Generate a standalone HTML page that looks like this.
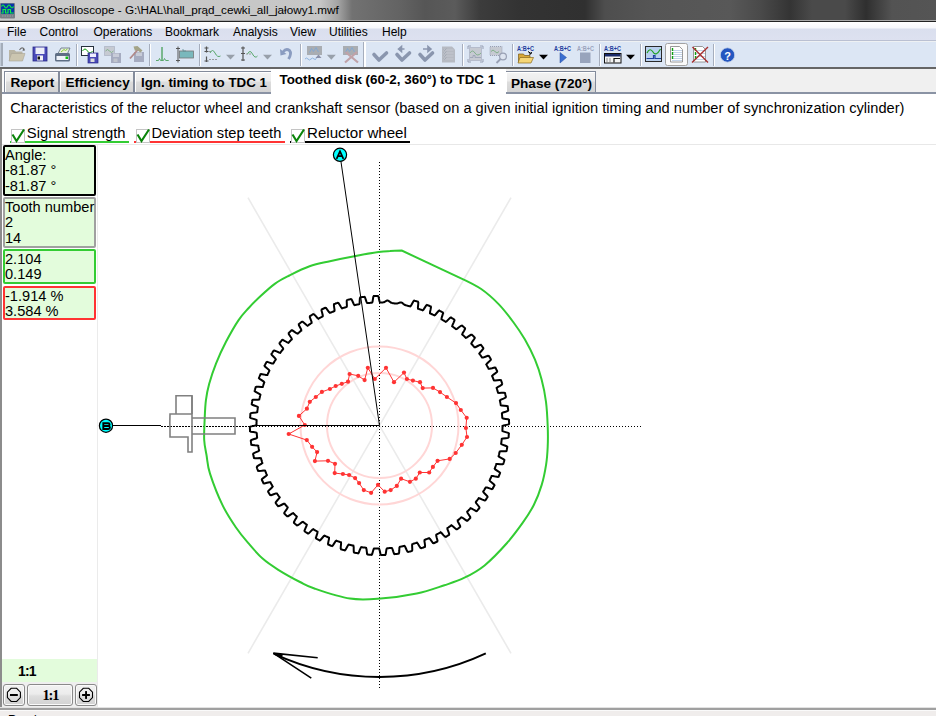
<!DOCTYPE html>
<html><head><meta charset="utf-8">
<style>
*{margin:0;padding:0;box-sizing:border-box}
html,body{width:936px;height:716px;overflow:hidden;background:#fff;font-family:"Liberation Sans",sans-serif;color:#000}
.a{position:absolute}
#title{left:0;top:0;width:936px;height:20px;background:linear-gradient(90deg,#cbcbcb 0,#c6c6c6 320px,#a4a4a4 338px,#727272 352px,#636363 400px,#565656 425px,#5b5b5b 455px,#3c3c3c 480px,#333 520px,#303030 585px,#4e4e4e 605px,#555 650px,#585858 730px,#4a4a4a 760px,#343434 790px,#4a4a4a 812px,#4a4a4a 845px,#2f2f2f 866px,#535353 892px,#555 936px)}
#title .t{left:21px;top:3px;font-size:11.7px;white-space:nowrap;color:#000}
.menu{font-size:12px;top:25px;white-space:nowrap}
.tab{top:71px;height:22px;border:1px solid #838b9b;border-bottom:none;box-shadow:inset 1px 1px 0 #fff;background:linear-gradient(#f3f3f3 0,#ececec 9px,#dddddd 10px,#d3d3d3 100%);font-weight:700;font-size:13.6px;white-space:nowrap;padding-left:5px;line-height:19px;padding-top:1px}
.box{left:3px;width:93px;border:2px solid #000;border-radius:2px;background:#e3fcdc;font-size:14.6px;line-height:15.8px;padding:0.5px 0 0 0;white-space:nowrap}
.cb{width:14px;height:14px;border:1px solid #c4c4c4;background:#fff}
.lbl{white-space:nowrap;top:124.5px}
.btn{top:684px;height:22px;border:1px solid #8a8a8a;border-radius:3px;box-shadow:inset 0 0 0 1px #fafafa;background:linear-gradient(#f2f2f2 0,#ececec 45%,#dedede 55%,#d2d2d2 100%)}
</style></head><body>
<div id="title" class="a">
 <svg class="a" style="left:0;top:0" width="18" height="20"><rect x="0" y="3" width="15" height="15.5" rx="1" fill="#7a7f86"/><rect x="1" y="3.7" width="13" height="10.3" fill="#0a34a8"/><path d="M1.5 6.5 q1.5 -3 3 0 t3 0 t3 0 t3 0" fill="none" stroke="#10f040" stroke-width="1.2"/><path d="M1.2 13 H3 V9.5 H5.5 V13 H8 V9.5 H10.5 V13 H13.8" fill="none" stroke="#10f040" stroke-width="1.2"/><path d="M2 16 h11" stroke="#9aa0a8" stroke-width="1" stroke-dasharray="1.5 1"/></svg>
 <div class="a t">USB Oscilloscope - G:\HAL\hall_prąd_cewki_all_jałowy1.mwf</div>
</div>
<div class="a" style="left:0;top:20px;width:936px;height:1px;background:#a9a9a9"></div>
<div class="a" style="left:0;top:21px;width:936px;height:1px;background:#222"></div>
<div class="a" style="left:0;top:22px;width:936px;height:18px;background:linear-gradient(#ffffff 0,#f6f7fb 6px,#dadfee 7px,#dde1f0 100%)"></div>
<div class="a" style="left:0;top:40px;width:936px;height:1px;background:#bac0d2"></div>
<div class="a" style="left:0;top:41px;width:936px;height:1px;background:#eef1f3"></div>
<div class="a menu" style="left:7px">File</div>
<div class="a menu" style="left:39.5px">Control</div>
<div class="a menu" style="left:93.5px">Operations</div>
<div class="a menu" style="left:165px">Bookmark</div>
<div class="a menu" style="left:233px">Analysis</div>
<div class="a menu" style="left:290px">View</div>
<div class="a menu" style="left:329px">Utilities</div>
<div class="a menu" style="left:382px">Help</div>
<div class="a" style="left:0;top:42px;width:936px;height:25px;background:#dce6f4"></div>
<svg class="a" style="left:0;top:0" width="936" height="68">
 <rect x="0.5" y="43" width="2.5" height="23" fill="#a4adb9"/>
 <!-- separators -->
 <g fill="#a6aebd">
  <rect x="76" y="44" width="1" height="22"/><rect x="149" y="44" width="1" height="22"/><rect x="199" y="44" width="1" height="22"/>
  <rect x="300" y="44" width="1" height="22"/><rect x="363" y="42" width="1" height="25"/><rect x="462" y="44" width="1" height="22"/>
  <rect x="512" y="44" width="1" height="22"/><rect x="599" y="44" width="1" height="22"/><rect x="640" y="44" width="1" height="22"/><rect x="713" y="44" width="1" height="22"/>
 </g>
 <g fill="#fff"><rect x="77" y="44" width="1" height="22"/><rect x="150" y="44" width="1" height="22"/><rect x="200" y="44" width="1" height="22"/><rect x="301" y="44" width="1" height="22"/><rect x="364" y="42" width="2" height="25"/><rect x="463" y="44" width="1" height="22"/><rect x="513" y="44" width="1" height="22"/><rect x="600" y="44" width="1" height="22"/><rect x="641" y="44" width="1" height="22"/><rect x="714" y="44" width="1" height="22"/></g>
 <!-- open folder disabled -->
 <path d="M9 50 h5.5 l1.5 1.5 h6.5 v9.5 h-13.5 z" fill="#b9b5a5"/>
 <path d="M11.5 53.5 h13.5 l-2.5 7.5 h-13.5 z" fill="#cbc5b0" stroke="#aaa595" stroke-width="0.6"/>
 <path d="M19.5 50 q2.5 -4 5 -0.5" fill="none" stroke="#707070" stroke-width="1.1"/><path d="M23.5 48 l1.5 2.5 l-2.5 0.3z" fill="#606060"/>
 <!-- floppy -->
 <rect x="33" y="47" width="14" height="14" fill="#4a4ab8" stroke="#2a2a88" stroke-width="0.8"/>
 <rect x="35.5" y="47.5" width="9" height="6.5" fill="#eceef8"/>
 <rect x="37" y="55.5" width="6" height="5" fill="#f4f4f4"/><rect x="37.5" y="56.5" width="2.5" height="3" fill="#111"/>
 <!-- printer -->
 <path d="M58 53.5 l3 -5.5 h9 l-2.5 5.5z" fill="#e6eee0" stroke="#5d6d80" stroke-width="0.8"/>
 <path d="M61 52 l3 -2.5 l1.5 1 l2 -1.5" fill="none" stroke="#8ad030" stroke-width="1"/>
 <rect x="55" y="53" width="15" height="8.5" rx="1.5" fill="#5e6e84"/>
 <rect x="56.5" y="56" width="12" height="4" fill="#eef2f8"/><rect x="65.5" y="56.5" width="2.5" height="2.5" fill="#10c010"/>
 <!-- graph + floppy -->
 <rect x="81.5" y="46.5" width="12" height="9" fill="#fff" stroke="#26303c" stroke-width="1"/>
 <path d="M82.5 51 q2.5 -4 5 0 t5 0" fill="none" stroke="#10a010" stroke-width="1"/>
 <rect x="88" y="53" width="10" height="10" fill="#4a4ab8" stroke="#2a2a88" stroke-width="0.7"/><rect x="90" y="53.5" width="6" height="3.5" fill="#eef"/><rect x="90.5" y="58.5" width="4" height="3.5" fill="#ddd"/>
 <!-- disabled graph+floppy -->
 <rect x="104.5" y="46.5" width="10" height="9" fill="#c6cad2" stroke="#9aa2b4" stroke-dasharray="1 1"/>
 <path d="M105.5 51 q2 -3 4 0 t4 0" fill="none" stroke="#70a878" stroke-width="0.8"/>
 <rect x="111" y="53" width="10" height="10" fill="#a6acc0"/><rect x="113" y="53.5" width="6" height="3.5" fill="#c8ccd8"/><rect x="113.5" y="58.5" width="4" height="3.5" fill="#c0c4cc"/>
 <!-- hammer + floppy -->
 <rect x="134" y="52" width="10" height="10" fill="#a6acc0"/><rect x="136" y="52.5" width="6" height="3.5" fill="#c8ccd8"/>
 <path d="M130 58.5 L138 49.5" stroke="#b08888" stroke-width="1.8"/>
 <path d="M133.5 46.5 l4 -0.5 l5 4.5 l-2 2 l-3.5 -2.5 l-2 1z" fill="#a4a488"/>
 <!-- peak -->
 <path d="M156 60.5 h2.5 l1 -2 l1 2 h1.5 v-13.5 v13.5 h1.5 l1 -2 l1.2 2 h3" fill="none" stroke="#5aa86c" stroke-width="1"/>
 <!-- teal band -->
 <rect x="179.5" y="51" width="14" height="7" fill="#7ab8bc" stroke="#777" stroke-width="0.8"/>
 <path d="M178 46.5 v16 M176 48.5 h4 M176 60.5 h4" stroke="#555" stroke-width="1"/>
 <path d="M183 49 v2 h3" fill="none" stroke="#5a8a90" stroke-width="0.8"/>
 <!-- arrows+wave 1 -->
 <path d="M206.5 46.5 v6 M206.5 56.5 v5.5 M204.5 48 h4 M204.5 61 h4 M204.5 51.5 h4" stroke="#555" stroke-width="1.2"/>
 <path d="M209 51.5 h2 M209 59.5 h2 m1 0 h2 m1 0 h2" stroke="#888" stroke-width="0.8"/>
 <path d="M210 53 q2.5 -5 5 0 t5.5 3" fill="none" stroke="#5aa86c" stroke-width="1"/>
 <path d="M226 54.8 h9 l-4.5 4.8z" fill="#98a0aa"/>
 <!-- arrows+wave 2 -->
 <path d="M243 46.5 v14.5 M241 48 h4 M241 60 h4 M241 53.5 h4" stroke="#555" stroke-width="1.2"/>
 <path d="M246 54 h2 m1 0 h2" stroke="#888" stroke-width="0.8"/>
 <path d="M247.5 54 q2.5 -5 5 0 t5 2" fill="none" stroke="#5aa86c" stroke-width="1"/>
 <path d="M263 54.8 h9 l-4.5 4.8z" fill="#98a0aa"/>
 <!-- undo -->
 <path d="M283 52 q3 -4 6.5 -1.5 q2.5 3 -1 8.5" fill="none" stroke="#8a9cc0" stroke-width="2.8"/>
 <path d="M280 49 l0.5 6.5 l6 -1.5z" fill="#8a9cc0"/>
 <!-- disabled graph w/ dropdown -->
 <rect x="307" y="46" width="15" height="9" fill="#a9adb2"/>
 <path d="M309.5 52.5 l2 -4 l2 3 l2.5 -4 l2.5 4.5" fill="none" stroke="#7aa6d8" stroke-width="0.8"/>
 <path d="M305 59 q1.5 -2 3 0 t3 0 t3 0 t3 -2" fill="none" stroke="#7aa6d8" stroke-width="0.8"/>
 <path d="M318.5 54.5 l-3 3.5 h6z" fill="#8a90a8"/>
 <path d="M326.8 54.8 h9 l-4.5 5z" fill="#98a0aa"/>
 <!-- disabled graph with X -->
 <rect x="343" y="46" width="15" height="9" fill="#a9adb2"/>
 <path d="M345.5 52.5 l2 -4 l2 3 l2.5 -4 l2.5 4.5" fill="none" stroke="#7aa6d8" stroke-width="0.8"/>
 <path d="M345 62.5 L357 52 M345.5 52 L358 62.5" stroke="#c0a2a8" stroke-width="2.2"/>
 <!-- checks -->
 <g fill="none" stroke="#8a96ae" stroke-width="3.6" stroke-linecap="round" stroke-linejoin="round">
  <path d="M374 54.5 l5 5.5 l7.5 -7"/><path d="M397 54.5 l5 5.5 l7.5 -7"/><path d="M420 54.5 l5 5.5 l7.5 -7"/>
 </g>
 <path d="M398.5 49 h6 M398.5 49 l3 -2.5 v5z" stroke="#8a96ae" stroke-width="1.6" fill="#8a96ae"/>
 <path d="M423 49 h5.5 M431 49 l-3 -2.5 v5z" stroke="#8a96ae" stroke-width="1.6" fill="#8a96ae"/>
 <!-- doc gray -->
 <path d="M442 46.5 h10 l3 3 v13 h-13z" fill="#b6bac2"/>
 <path d="M443.5 50 h10 M443.5 53 h10 M443.5 56 h10 M443.5 59 h10" stroke="#c8ccd4" stroke-width="0.8"/>
 <path d="M443.5 49.5 l1 1 l2 -2 M443.5 52.5 l1 1 l2 -2 M443.5 55.5 l1 1 l2 -2 M443.5 58.5 l1 1 l2 -2" fill="none" stroke="#9aa0ac" stroke-width="0.7"/>
 <!-- dotted graph -->
 <rect x="469.5" y="47.5" width="12" height="13" fill="#c6cad2" stroke="#98a0b4" stroke-dasharray="1 1"/>
 <path d="M470 53 q2.5 -4 5 0 t6 0" fill="none" stroke="#70a878" stroke-width="0.8"/>
 <path d="M470 57.5 h3 v-2 h2 v2 h6" fill="none" stroke="#98a0b4" stroke-width="0.8"/>
 <path d="M468 46 h3 M468 46 v3 M480 46 h3 M483 46 v3 M468 62 h3 M468 62 v-3 M480 62 h3 M483 62 v-3" stroke="#98a0b4" stroke-width="1"/>
 <!-- magnifier -->
 <rect x="490" y="46.5" width="12" height="9" fill="#c6cad2" stroke="#98a0b4" stroke-dasharray="1 1"/>
 <path d="M491 51.5 q2 -3 4 0 t4 0" fill="none" stroke="#70a878" stroke-width="0.8"/>
 <circle cx="503" cy="56.5" r="3.4" fill="#dde4f0" stroke="#98a0b4" stroke-width="1.2"/>
 <path d="M500.5 59 l-4 4" stroke="#98a0b4" stroke-width="1.8"/>
 <!-- A:B+C texts -->
 <g font-family="Liberation Sans" font-weight="700" font-size="6.5" fill="#1c3c9c">
  <text x="517" y="51" textLength="17" lengthAdjust="spacingAndGlyphs">A:B+C</text>
  <text x="554" y="51" textLength="17" lengthAdjust="spacingAndGlyphs">A:B+C</text>
  <text x="577" y="51" textLength="17" lengthAdjust="spacingAndGlyphs" fill="#9aa4bc">A:B+C</text>
  <text x="604" y="51" textLength="17" lengthAdjust="spacingAndGlyphs">A:B+C</text>
 </g>
 <!-- yellow folder -->
 <path d="M518.5 54 h5 l1 1.5 h5.5 v7 h-11.5z" fill="#d8a838" stroke="#7a5a18" stroke-width="0.7"/>
 <path d="M520 57.5 h13.5 l-2.5 5.5 h-13z" fill="#f6d676" stroke="#8a6a20" stroke-width="0.7"/>
 <path d="M528 51.5 l3 2 M531.5 52 l-0.5 2 l-2 0" stroke="#000" stroke-width="1" fill="none"/>
 <path d="M539 54.8 h9 l-4.5 4.8z" fill="#000"/>
 <!-- play -->
 <path d="M560 52.5 l6.5 5 l-6.5 5.5z" fill="#3a6ed0" stroke="#2a4ea0" stroke-width="0.5"/>
 <rect x="580" y="52.5" width="10.5" height="10.5" fill="#98a4bc"/>
 <!-- window -->
 <rect x="604.5" y="53.5" width="16.5" height="9.5" fill="#f4f4f4" stroke="#111" stroke-width="1"/>
 <rect x="605" y="54" width="15.5" height="2.5" fill="#1a2a6a"/>
 <path d="M606 59 h2 m1 0 h2 M606 61 h2 m1 0 h2" stroke="#777" stroke-width="0.8"/>
 <path d="M614 62.5 v-4 h6" fill="none" stroke="#111" stroke-width="1.2"/>
 <path d="M626 54.8 h9 l-4.5 4.8z" fill="#000"/>
 <!-- chart icon -->
 <rect x="645.5" y="46.5" width="16" height="15" fill="#b8d0ee" stroke="#2a2a2a" stroke-width="1"/>
 <path d="M647 53 q3 -6 6 -1 t7.5 -3" fill="none" stroke="#20a020" stroke-width="1.2"/>
 <path d="M646.5 58.5 h7 v-3 h1.5 v3 h6" fill="none" stroke="#2040a0" stroke-width="1.2"/>
 <!-- pressed button -->
 <rect x="665.5" y="43.5" width="22" height="22" rx="2" fill="#fafafa" stroke="#a2a2a2" stroke-width="1"/>
 <path d="M670.5 46.5 h9 l3 3 v12.5 h-12z" fill="#fff" stroke="#808080" stroke-width="0.8"/>
 <path d="M672 50.5 h10 M672 52.5 h10 M672 54.5 h10 M672 56.5 h10 M672 58.5 h10 M672 60.5 h10" stroke="#a8c0e0" stroke-width="0.7"/>
 <path d="M672.5 48 v3 M672.5 52 v3 M672.5 56 v3" stroke="#10a010" stroke-width="1.4"/>
 <!-- doc with X -->
 <path d="M693.5 46.5 h9 l3 3 v12.5 h-12z" fill="#fff" stroke="#808080" stroke-width="0.8"/>
 <path d="M695 50.5 h10 M695 53.5 h10 M695 56.5 h10 M695 59.5 h10" stroke="#a8c0e0" stroke-width="0.7"/>
 <path d="M695.5 48 v3 M695.5 52 v3 M695.5 56 v3" stroke="#10a010" stroke-width="1.4"/>
 <path d="M692 62.5 L708 47 M692.5 47 L708 62.5" stroke="#a83030" stroke-width="1.4"/>
 <!-- help -->
 <circle cx="727.5" cy="55" r="7.2" fill="#2456c0" stroke="#c8d4e8" stroke-width="0.8"/>
 <text x="727.5" y="59.5" font-family="Liberation Sans" font-weight="700" font-size="11" fill="#fff" text-anchor="middle">?</text>
</svg>

<div class="a" style="left:0;top:67px;width:936px;height:2px;background:#656565"></div>
<div class="a" style="left:0;top:69px;width:936px;height:23px;background:#f0f0f0"></div>
<div class="a" style="left:2px;top:69px;width:270px;height:2px;background:#fafafa"></div>
<div class="a" style="left:2px;top:69px;width:2px;height:23px;background:#fafafa"></div>
<div class="a tab" style="left:4px;width:55px;padding-left:5.5px">Report</div>
<div class="a tab" style="left:59px;width:75px;padding-left:5.5px">Efficiency</div>
<div class="a tab" style="left:134px;width:138px;padding-left:6px;font-size:13.35px">Ign. timing to TDC 1</div>
<div class="a tab" style="left:505px;width:91px;top:71px;padding-left:5px;line-height:19px;padding-top:1.5px">Phase (720°)</div>
<div class="a" style="left:0;top:92px;width:936px;height:2px;background:#8a93a4"></div>
<div class="a" style="left:271px;top:69px;width:235px;height:25px;background:#fff"></div>
<div class="a" style="left:279.5px;top:72px;font-weight:700;font-size:13.4px;white-space:nowrap">Toothed disk (60-2, 360°) to TDC 1</div>
<div class="a" style="left:0;top:69px;width:2px;height:639px;background:#8c8c8c"></div>
<div class="a" style="left:10.3px;top:100px;font-size:14.61px;white-space:nowrap">Characteristics of the reluctor wheel and crankshaft sensor (based on a given initial ignition timing and number of synchronization cylinder)</div>
<div class="a" style="left:2px;top:143.5px;width:934px;height:1px;background:#e8e8e8"></div>
<!-- checkboxes -->
<div class="a" style="left:10px;top:141px;width:119px;height:2px;background:#33cc33"></div>
<div class="a" style="left:134px;top:141px;width:151px;height:2px;background:#ff3333"></div>
<div class="a" style="left:290px;top:141px;width:120px;height:2px;background:#000"></div>
<div class="a cb" style="left:11px;top:129px"></div>
<div class="a cb" style="left:136px;top:129px"></div>
<div class="a cb" style="left:291px;top:129px"></div>
<svg class="a" style="left:0;top:120px" width="320" height="26"><g fill="none" stroke="#0a840a" stroke-width="2.1" stroke-linejoin="miter"><path d="M12.5 14.5 L16.5 21 L24 9.5"/><path d="M137.5 14.5 L141.5 21 L149 9.5"/><path d="M292.5 14.5 L296.5 21 L304 9.5"/></g></svg>
<div class="a lbl" style="left:26.8px;font-size:14.8px">Signal strength</div>
<div class="a lbl" style="left:151.5px;font-size:14.7px">Deviation step teeth</div>
<div class="a lbl" style="left:307px;font-size:15.1px;top:124px">Reluctor wheel</div>
<!-- left panel -->
<div class="a" style="left:97px;top:145px;width:1px;height:562px;background:#ebebeb"></div>
<div class="a box" style="top:145px;height:51px">Angle:<br>-81.87 °<br>-81.87 °</div>
<div class="a box" style="top:197px;height:51px;border-color:#a0a0a0">Tooth number<br>2<br>14</div>
<div class="a box" style="top:249px;height:35px;border-color:#33cc33">2.104<br>0.149</div>
<div class="a box" style="top:286px;height:34px;border-color:#ff3333">-1.914 %<br>3.584 %</div>

<svg width="936" height="716" style="position:absolute;left:0;top:0">
 <g stroke="#ebebeb" stroke-width="1.6"><line x1="248" y1="653.3" x2="511" y2="197.7"/><line x1="511" y1="653.3" x2="248" y2="197.7"/></g>
 <g stroke="#000" stroke-width="1" stroke-dasharray="1 2">
  <line x1="379.5" y1="162" x2="379.5" y2="688"/>
  <line x1="250" y1="426.5" x2="642" y2="426.5"/>
 </g>
 <line x1="161" y1="426.5" x2="250" y2="426.5" stroke="#000" stroke-width="1" stroke-dasharray="2 1"/>
 <g fill="none" stroke="#ffd6d6" stroke-width="2">
  <circle cx="379.5" cy="425.5" r="52.5"/><circle cx="379.5" cy="425.5" r="79"/>
 </g>
 <path d="M204.2 440 C203.9 434.3 204.3 427.2 204.6 420.6 C204.9 414 205.1 406.5 205.9 400.4 C206.7 394.2 207.5 389.8 209.2 383.7 C210.9 377.6 213.2 370.6 216 363.6 C218.8 356.6 222.2 349.1 226 341.8 C229.8 334.6 234.8 325.7 238.6 320.1 C242.4 314.5 245 312.1 248.7 308 C252.4 303.9 256.5 299.9 260.9 295.8 C265.3 291.7 270.4 287 275.1 283.6 C279.8 280.2 283.6 278.4 289.3 275.5 C295.1 272.6 302.8 268.7 309.6 266.3 C316.4 263.9 322.4 262.9 329.9 261.2 C337.3 259.5 346.2 257.7 354.3 256.2 C362.4 254.7 372.7 252.9 378.6 252.1 C384.6 251.2 386.1 251.3 390 251.1 C393.9 250.8 401.8 250.6 401.8 250.6 C401.8 250.6 460 277.8 460 277.8 C460 277.8 474.7 284.5 481.2 289 C487.7 293.5 493.7 299 499.1 304.6 C504.5 310.2 509.3 316.7 513.6 322.5 C517.9 328.3 521.2 333.2 524.8 339.3 C528.3 345.4 532.1 352.7 534.9 359.4 C537.7 366.1 539.8 372.4 541.6 379.5 C543.5 386.6 545 394.1 546 401.8 C547 409.6 547.4 418.5 547.7 426 C548 433.5 548 440.4 547.7 446.8 C547.4 453.2 547.1 458.4 546.1 464.7 C545.1 471 543.8 478.2 541.7 484.9 C539.7 491.6 537 498.7 533.8 505 C530.6 511.3 527.1 516.6 522.6 522.9 C518.1 529.2 513.3 535.9 507 543 C500.7 550.1 491.7 559.6 484.6 565.4 C477.5 571.2 471.2 574.4 464.5 577.7 C457.8 581 452.4 582.6 444.4 585.3 C436.4 587.9 427.3 591.4 416.7 593.6 C406.1 595.8 391.7 597.8 380.6 598.6 C369.5 599.4 361 600.3 350 598.6 C339 596.9 322.7 591.3 314.4 588.5 C306.1 585.7 306 585.1 300 582 C294 578.9 284.5 573.7 278.3 569.8 C272.1 565.9 267.6 563.1 262.6 558.6 C257.6 554.1 252.6 548.1 248.1 542.9 C243.6 537.7 240.1 533.5 235.8 527.2 C231.5 520.9 226.7 513.8 222.4 504.9 C218.1 496 212.7 481.9 210 473.6 C207.3 465.3 207.5 460.6 206.5 455 C205.5 449.4 204.5 445.7 204.2 440Z" fill="none" stroke="#33cc33" stroke-width="2"/>
 <path d="M503.7 425.5 L506.3 424.9 L508.6 424.4 L509.1 423.8 L509.1 423.2 L509.1 422.7 L509.1 422.1 L509 421.5 L509 421 L509 420.4 L509 419.8 L508.1 419.3 L505.6 418.9 L503.1 418.5 L502.3 418 L502.2 417.5 L502.2 416.9 L502.2 416.4 L502.1 415.8 L502.1 415.3 L502 414.8 L502 414.2 L501.9 413.7 L501.9 413.2 L503.1 412.5 L505.6 411.7 L507.8 410.9 L508.2 410.3 L508.1 409.7 L508.1 409.1 L508 408.6 L507.9 408 L507.8 407.5 L507.8 406.9 L507.7 406.3 L506.8 405.9 L504.2 405.7 L501.7 405.6 L500.8 405.2 L500.7 404.7 L500.6 404.1 L500.5 403.6 L500.4 403.1 L500.3 402.6 L500.2 402 L500.1 401.5 L500 401 L499.9 400.5 L501 399.7 L503.5 398.6 L505.6 397.6 L505.9 396.9 L505.8 396.3 L505.6 395.8 L505.5 395.2 L505.4 394.7 L505.3 394.1 L505.1 393.6 L505 393.1 L504 392.7 L501.5 392.8 L499 392.9 L498 392.6 L497.9 392.1 L497.7 391.6 L497.6 391.1 L497.4 390.6 L497.3 390.1 L497.1 389.5 L497 389 L496.8 388.5 L496.6 388 L497.7 387.1 L500 385.8 L501.9 384.5 L502.2 383.8 L502 383.3 L501.9 382.8 L501.7 382.2 L501.5 381.7 L501.3 381.2 L501.1 380.6 L500.9 380.1 L499.9 379.9 L497.4 380.2 L494.9 380.6 L493.9 380.4 L493.7 379.9 L493.5 379.4 L493.3 378.9 L493.1 378.4 L492.9 377.9 L492.7 377.4 L492.5 376.9 L492.3 376.5 L492.1 376 L493 375 L495.2 373.4 L497 372 L497.2 371.2 L497 370.7 L496.7 370.2 L496.5 369.7 L496.2 369.2 L496 368.7 L495.7 368.2 L495.5 367.7 L494.5 367.5 L492 368.2 L489.6 368.8 L488.6 368.7 L488.4 368.2 L488.1 367.8 L487.8 367.3 L487.6 366.8 L487.3 366.3 L487.1 365.9 L486.8 365.4 L486.6 364.9 L486.3 364.5 L487.1 363.4 L489.1 361.6 L490.7 360 L490.9 359.2 L490.6 358.8 L490.3 358.3 L490 357.8 L489.7 357.3 L489.4 356.8 L489.1 356.3 L488.8 355.9 L487.8 355.8 L485.4 356.7 L483.1 357.6 L482.1 357.6 L481.8 357.2 L481.5 356.7 L481.2 356.3 L480.9 355.8 L480.6 355.4 L480.3 355 L479.9 354.5 L479.6 354.1 L479.3 353.6 L480 352.5 L481.8 350.5 L483.3 348.7 L483.3 348 L483 347.5 L482.7 347.1 L482.3 346.6 L482 346.2 L481.6 345.7 L481.3 345.3 L480.9 344.8 L479.9 344.9 L477.7 346 L475.4 347.2 L474.4 347.3 L474.1 346.8 L473.7 346.4 L473.4 346 L473 345.6 L472.7 345.2 L472.3 344.8 L472 344.4 L471.6 344 L471.3 343.6 L471.8 342.4 L473.4 340.2 L474.7 338.3 L474.7 337.5 L474.3 337.1 L473.9 336.7 L473.5 336.3 L473.1 335.9 L472.7 335.5 L472.3 335.1 L471.9 334.7 L470.9 334.8 L468.8 336.2 L466.7 337.6 L465.7 337.8 L465.3 337.4 L464.9 337 L464.6 336.6 L464.2 336.3 L463.8 335.9 L463.4 335.5 L463 335.2 L462.6 334.8 L462.2 334.5 L462.6 333.2 L464 330.9 L465.1 328.8 L465 328.1 L464.5 327.7 L464.1 327.3 L463.7 327 L463.2 326.6 L462.8 326.2 L462.4 325.9 L461.9 325.5 L461 325.8 L459 327.3 L457 328.9 L456.1 329.2 L455.6 328.9 L455.2 328.6 L454.8 328.2 L454.4 327.9 L454 327.6 L453.5 327.3 L453.1 326.9 L452.7 326.6 L452.2 326.3 L452.5 325 L453.6 322.6 L454.5 320.4 L454.3 319.7 L453.8 319.3 L453.4 319 L452.9 318.7 L452.4 318.4 L452 318.1 L451.5 317.7 L451 317.4 L450.1 317.8 L448.3 319.6 L446.5 321.4 L445.6 321.8 L445.1 321.5 L444.7 321.2 L444.2 320.9 L443.8 320.6 L443.3 320.3 L442.8 320.1 L442.4 319.8 L441.9 319.5 L441.5 319.2 L441.6 317.9 L442.4 315.4 L443.1 313.1 L442.8 312.4 L442.3 312.1 L441.8 311.9 L441.3 311.6 L440.8 311.3 L440.3 311.1 L439.8 310.8 L439.3 310.5 L438.5 311 L436.8 313 L435.2 314.9 L434.4 315.4 L433.9 315.2 L433.4 314.9 L432.9 314.7 L432.5 314.5 L432 314.3 L431.5 314 L431 313.8 L430.5 313.6 L430 313.4 L430 312 L430.6 309.4 L431 307.1 L430.7 306.4 L430.1 306.2 L429.6 306 L429.1 305.8 L428.6 305.5 L428 305.3 L427.5 305.1 L427 304.9 L426.2 305.5 L424.8 307.6 L423.4 309.7 L422.6 310.3 L422.1 310.1 L421.6 309.9 L421.1 309.7 L420.6 309.6 L420.1 309.4 L419.5 309.2 L419 309 L418.5 308.9 L418 308.7 L417.9 307.3 L418.2 304.7 L418.3 302.4 L417.9 301.7 L417.4 301.6 L416.9 301.4 L416.3 301.2 L415.8 301.1 L415.2 300.9 L414.7 300.8 L414.1 300.6 L413.4 301.3 L412.2 303.5 L411 305.7 L410.3 306.4 L409.8 306.3 L409.3 306.2 L408.7 306 L408.2 305.9 L407.7 305.8 L407.2 305.6 L406.7 305.5 L406.1 305.4 L405.6 305.2 L405.1 305 L404.6 304.8 L404.1 304.5 L403.7 304.1 L403.2 303.7 L402.7 303.2 L402.2 302.9 L401.7 302.6 L401.2 302.4 L400.7 302.4 L400.1 302.5 L399.5 302.7 L398.9 302.9 L398.3 303.1 L397.8 303.3 L397.2 303.4 L396.6 303.5 L396.1 303.5 L395.6 303.5 L395 303.5 L394.5 303.4 L394 303.3 L393.4 303.3 L392.9 303.2 L392.4 303.1 L391.8 302.9 L391.3 302.7 L390.8 302.5 L390.3 302.2 L389.8 301.8 L389.3 301.4 L388.8 301 L388.2 300.7 L387.7 300.6 L387.1 300.6 L386.6 300.7 L386 301 L385.5 301.4 L384.9 301.7 L384.4 302 L383.8 302.2 L383.3 302.3 L382.7 302.4 L382.2 302.5 L381.6 302.5 L381.1 302.5 L380.6 302.5 L380 302.5 L379.5 301.3 L378.9 298.7 L378.4 296.4 L377.8 295.9 L377.2 295.9 L376.7 295.9 L376.1 295.9 L375.5 296 L375 296 L374.4 296 L373.8 296 L373.3 296.9 L372.9 299.4 L372.5 301.9 L372 302.7 L371.5 302.8 L370.9 302.8 L370.4 302.8 L369.8 302.9 L369.3 302.9 L368.8 303 L368.2 303 L367.7 303.1 L367.2 303.1 L366.5 301.9 L365.7 299.4 L364.9 297.2 L364.3 296.8 L363.7 296.9 L363.1 296.9 L362.6 297 L362 297.1 L361.5 297.2 L360.9 297.2 L360.3 297.3 L359.9 298.2 L359.7 300.8 L359.6 303.3 L359.2 304.2 L358.7 304.3 L358.1 304.4 L357.6 304.5 L357.1 304.6 L356.6 304.7 L356 304.8 L355.5 304.9 L355 305 L354.5 305.1 L353.7 304 L352.6 301.5 L351.6 299.4 L350.9 299.1 L350.3 299.2 L349.8 299.4 L349.2 299.5 L348.7 299.6 L348.1 299.7 L347.6 299.9 L347.1 300 L346.7 301 L346.8 303.5 L346.9 306 L346.6 307 L346.1 307.1 L345.6 307.3 L345.1 307.4 L344.6 307.6 L344.1 307.7 L343.5 307.9 L343 308 L342.5 308.2 L342 308.4 L341.1 307.3 L339.8 305 L338.5 303.1 L337.8 302.8 L337.3 303 L336.8 303.1 L336.2 303.3 L335.7 303.5 L335.2 303.7 L334.6 303.9 L334.1 304.1 L333.9 305.1 L334.2 307.6 L334.6 310.1 L334.4 311.1 L333.9 311.3 L333.4 311.5 L332.9 311.7 L332.4 311.9 L331.9 312.1 L331.4 312.3 L330.9 312.5 L330.5 312.7 L330 312.9 L329 312 L327.4 309.8 L326 308 L325.2 307.8 L324.7 308 L324.2 308.3 L323.7 308.5 L323.2 308.8 L322.7 309 L322.2 309.3 L321.7 309.5 L321.5 310.5 L322.2 313 L322.8 315.4 L322.7 316.4 L322.2 316.6 L321.8 316.9 L321.3 317.2 L320.8 317.4 L320.3 317.7 L319.9 317.9 L319.4 318.2 L318.9 318.4 L318.5 318.7 L317.4 317.9 L315.6 315.9 L314 314.3 L313.2 314.1 L312.8 314.4 L312.3 314.7 L311.8 315 L311.3 315.3 L310.8 315.6 L310.3 315.9 L309.9 316.2 L309.8 317.2 L310.7 319.6 L311.6 321.9 L311.6 322.9 L311.2 323.2 L310.7 323.5 L310.3 323.8 L309.8 324.1 L309.4 324.4 L309 324.7 L308.5 325.1 L308.1 325.4 L307.6 325.7 L306.5 325 L304.5 323.2 L302.7 321.7 L302 321.7 L301.5 322 L301.1 322.3 L300.6 322.7 L300.2 323 L299.7 323.4 L299.3 323.7 L298.8 324.1 L298.9 325.1 L300 327.3 L301.2 329.6 L301.3 330.6 L300.8 330.9 L300.4 331.3 L300 331.6 L299.6 332 L299.2 332.3 L298.8 332.7 L298.4 333 L298 333.4 L297.6 333.7 L296.4 333.2 L294.2 331.6 L292.3 330.3 L291.5 330.3 L291.1 330.7 L290.7 331.1 L290.3 331.5 L289.9 331.9 L289.5 332.3 L289.1 332.7 L288.7 333.1 L288.8 334.1 L290.2 336.2 L291.6 338.3 L291.8 339.3 L291.4 339.7 L291 340.1 L290.6 340.4 L290.3 340.8 L289.9 341.2 L289.5 341.6 L289.2 342 L288.8 342.4 L288.5 342.8 L287.2 342.4 L284.9 341 L282.8 339.9 L282.1 340 L281.7 340.5 L281.3 340.9 L281 341.3 L280.6 341.8 L280.2 342.2 L279.9 342.6 L279.5 343.1 L279.8 344 L281.3 346 L282.9 348 L283.2 348.9 L282.9 349.4 L282.6 349.8 L282.2 350.2 L281.9 350.6 L281.6 351 L281.3 351.5 L280.9 351.9 L280.6 352.3 L280.3 352.8 L279 352.5 L276.6 351.4 L274.4 350.5 L273.7 350.7 L273.3 351.2 L273 351.6 L272.7 352.1 L272.4 352.6 L272.1 353 L271.7 353.5 L271.4 354 L271.8 354.9 L273.6 356.7 L275.4 358.5 L275.8 359.4 L275.5 359.9 L275.2 360.3 L274.9 360.8 L274.6 361.2 L274.3 361.7 L274.1 362.2 L273.8 362.6 L273.5 363.1 L273.2 363.5 L271.9 363.4 L269.4 362.6 L267.1 361.9 L266.4 362.2 L266.1 362.7 L265.9 363.2 L265.6 363.7 L265.3 364.2 L265.1 364.7 L264.8 365.2 L264.5 365.7 L265 366.5 L267 368.2 L268.9 369.8 L269.4 370.6 L269.2 371.1 L268.9 371.6 L268.7 372.1 L268.5 372.5 L268.3 373 L268 373.5 L267.8 374 L267.6 374.5 L267.4 375 L266 375 L263.4 374.4 L261.1 374 L260.4 374.3 L260.2 374.9 L260 375.4 L259.8 375.9 L259.5 376.4 L259.3 377 L259.1 377.5 L258.9 378 L259.5 378.8 L261.6 380.2 L263.7 381.6 L264.3 382.4 L264.1 382.9 L263.9 383.4 L263.7 383.9 L263.6 384.4 L263.4 384.9 L263.2 385.5 L263 386 L262.9 386.5 L262.7 387 L261.3 387.1 L258.7 386.8 L256.4 386.7 L255.7 387.1 L255.6 387.6 L255.4 388.1 L255.2 388.7 L255.1 389.2 L254.9 389.8 L254.8 390.3 L254.6 390.9 L255.3 391.6 L257.5 392.8 L259.7 394 L260.4 394.7 L260.3 395.2 L260.2 395.7 L260 396.3 L259.9 396.8 L259.8 397.3 L259.7 397.8 L259.5 398.4 L259.4 398.9 L259.3 399.4 L258 399.7 L255.3 399.7 L253 399.8 L252.4 400.2 L252.3 400.8 L252.2 401.3 L252.1 401.9 L252 402.4 L251.9 403 L251.8 403.6 L251.7 404.1 L252.4 404.8 L254.8 405.7 L257.1 406.7 L257.9 407.3 L257.8 407.9 L257.7 408.4 L257.6 408.9 L257.6 409.4 L257.5 410 L257.4 410.5 L257.4 411 L257.3 411.6 L257.2 412.1 L255.9 412.5 L253.3 412.8 L251 413.1 L250.4 413.6 L250.4 414.2 L250.3 414.8 L250.3 415.3 L250.3 415.9 L250.2 416.5 L250.2 417 L250.1 417.6 L250.9 418.2 L253.4 418.9 L255.8 419.6 L256.6 420.1 L256.6 420.7 L256.6 421.2 L256.6 421.7 L256.5 422.3 L256.5 422.8 L256.5 423.4 L256.5 423.9 L256.5 424.4 L256.5 425 L255.3 425.5 L252.7 426.1 L250.4 426.6 L249.9 427.2 L249.9 427.8 L249.9 428.3 L249.9 428.9 L250 429.5 L250 430 L250 430.6 L250 431.2 L250.9 431.7 L253.4 432.1 L255.9 432.5 L256.7 433 L256.8 433.5 L256.8 434.1 L256.8 434.6 L256.9 435.2 L256.9 435.7 L257 436.2 L257 436.8 L257.1 437.3 L257.1 437.8 L255.9 438.5 L253.4 439.3 L251.2 440.1 L250.8 440.7 L250.9 441.3 L250.9 441.9 L251 442.4 L251.1 443 L251.2 443.5 L251.2 444.1 L251.3 444.7 L252.2 445.1 L254.8 445.3 L257.3 445.4 L258.2 445.8 L258.3 446.3 L258.4 446.9 L258.5 447.4 L258.6 447.9 L258.7 448.4 L258.8 449 L258.9 449.5 L259 450 L259.1 450.5 L258 451.3 L255.5 452.4 L253.4 453.4 L253.1 454.1 L253.2 454.7 L253.4 455.2 L253.5 455.8 L253.6 456.3 L253.7 456.9 L253.9 457.4 L254 457.9 L255 458.3 L257.5 458.2 L260 458.1 L261 458.4 L261.1 458.9 L261.3 459.4 L261.4 459.9 L261.6 460.4 L261.7 460.9 L261.9 461.5 L262 462 L262.2 462.5 L262.4 463 L261.3 463.9 L259 465.2 L257.1 466.5 L256.8 467.2 L257 467.7 L257.1 468.2 L257.3 468.8 L257.5 469.3 L257.7 469.8 L257.9 470.4 L258.1 470.9 L259.1 471.1 L261.6 470.8 L264.1 470.4 L265.1 470.6 L265.3 471.1 L265.5 471.6 L265.7 472.1 L265.9 472.6 L266.1 473.1 L266.3 473.6 L266.5 474.1 L266.7 474.5 L266.9 475 L266 476 L263.8 477.6 L262 479 L261.8 479.8 L262 480.3 L262.3 480.8 L262.5 481.3 L262.8 481.8 L263 482.3 L263.3 482.8 L263.5 483.3 L264.5 483.5 L267 482.8 L269.4 482.2 L270.4 482.3 L270.6 482.8 L270.9 483.2 L271.2 483.7 L271.4 484.2 L271.7 484.7 L271.9 485.1 L272.2 485.6 L272.4 486.1 L272.7 486.5 L271.9 487.6 L269.9 489.4 L268.3 491 L268.1 491.8 L268.4 492.2 L268.7 492.7 L269 493.2 L269.3 493.7 L269.6 494.2 L269.9 494.7 L270.2 495.1 L271.2 495.2 L273.6 494.3 L275.9 493.4 L276.9 493.4 L277.2 493.8 L277.5 494.3 L277.8 494.7 L278.1 495.2 L278.4 495.6 L278.7 496 L279.1 496.5 L279.4 496.9 L279.7 497.4 L279 498.5 L277.2 500.5 L275.7 502.3 L275.7 503 L276 503.5 L276.3 503.9 L276.7 504.4 L277 504.8 L277.4 505.3 L277.7 505.7 L278.1 506.2 L279.1 506.1 L281.3 505 L283.6 503.8 L284.6 503.7 L284.9 504.2 L285.3 504.6 L285.6 505 L286 505.4 L286.3 505.8 L286.7 506.2 L287 506.6 L287.4 507 L287.7 507.4 L287.2 508.6 L285.6 510.8 L284.3 512.7 L284.3 513.5 L284.7 513.9 L285.1 514.3 L285.5 514.7 L285.9 515.1 L286.3 515.5 L286.7 515.9 L287.1 516.3 L288.1 516.2 L290.2 514.8 L292.3 513.4 L293.3 513.2 L293.7 513.6 L294.1 514 L294.4 514.4 L294.8 514.7 L295.2 515.1 L295.6 515.5 L296 515.8 L296.4 516.2 L296.8 516.5 L296.4 517.8 L295 520.1 L293.9 522.2 L294 522.9 L294.5 523.3 L294.9 523.7 L295.3 524 L295.8 524.4 L296.2 524.8 L296.6 525.1 L297.1 525.5 L298 525.2 L300 523.7 L302 522.1 L302.9 521.8 L303.4 522.1 L303.8 522.4 L304.2 522.8 L304.6 523.1 L305 523.4 L305.5 523.7 L305.9 524.1 L306.3 524.4 L306.8 524.7 L306.5 526 L305.4 528.4 L304.5 530.6 L304.7 531.3 L305.2 531.7 L305.6 532 L306.1 532.3 L306.6 532.6 L307 532.9 L307.5 533.3 L308 533.6 L308.9 533.2 L310.7 531.4 L312.5 529.6 L313.4 529.2 L313.9 529.5 L314.3 529.8 L314.8 530.1 L315.2 530.4 L315.7 530.7 L316.2 530.9 L316.6 531.2 L317.1 531.5 L317.5 531.8 L317.4 533.1 L316.6 535.6 L315.9 537.9 L316.2 538.6 L316.7 538.9 L317.2 539.1 L317.7 539.4 L318.2 539.7 L318.7 539.9 L319.2 540.2 L319.7 540.5 L320.5 540 L322.2 538 L323.8 536.1 L324.6 535.6 L325.1 535.8 L325.6 536.1 L326.1 536.3 L326.5 536.5 L327 536.7 L327.5 537 L328 537.2 L328.5 537.4 L329 537.6 L329 539 L328.4 541.6 L328 543.9 L328.3 544.6 L328.9 544.8 L329.4 545 L329.9 545.2 L330.4 545.5 L331 545.7 L331.5 545.9 L332 546.1 L332.8 545.5 L334.2 543.4 L335.6 541.3 L336.4 540.7 L336.9 540.9 L337.4 541.1 L337.9 541.3 L338.4 541.4 L338.9 541.6 L339.5 541.8 L340 542 L340.5 542.1 L341 542.3 L341.1 543.7 L340.8 546.3 L340.7 548.6 L341.1 549.3 L341.6 549.4 L342.1 549.6 L342.7 549.8 L343.2 549.9 L343.8 550.1 L344.3 550.2 L344.9 550.4 L345.6 549.7 L346.8 547.5 L348 545.3 L348.7 544.6 L349.2 544.7 L349.7 544.8 L350.3 545 L350.8 545.1 L351.3 545.2 L351.8 545.3 L352.4 545.5 L352.9 545.6 L353.4 545.7 L353.7 547 L353.7 549.7 L353.8 552 L354.2 552.6 L354.8 552.7 L355.3 552.8 L355.9 552.9 L356.4 553 L357 553.1 L357.6 553.2 L358.1 553.3 L358.8 552.6 L359.7 550.2 L360.7 547.9 L361.3 547.1 L361.9 547.2 L362.4 547.3 L362.9 547.4 L363.4 547.4 L364 547.5 L364.5 547.6 L365 547.6 L365.6 547.7 L366.1 547.8 L366.5 549.1 L366.8 551.7 L367.1 554 L367.6 554.6 L368.2 554.6 L368.8 554.7 L369.3 554.7 L369.9 554.7 L370.5 554.8 L371 554.8 L371.6 554.9 L372.2 554.1 L372.9 551.6 L373.6 549.2 L374.1 548.4 L374.7 548.4 L375.2 548.4 L375.7 548.4 L376.3 548.5 L376.8 548.5 L377.4 548.5 L377.9 548.5 L378.4 548.5 L379 548.5 L379.5 549.7 L380.1 552.3 L380.6 554.6 L381.2 555.1 L381.8 555.1 L382.3 555.1 L382.9 555.1 L383.5 555 L384 555 L384.6 555 L385.2 555 L385.7 554.1 L386.1 551.6 L386.5 549.1 L387 548.3 L387.5 548.2 L388.1 548.2 L388.6 548.2 L389.2 548.1 L389.7 548.1 L390.2 548 L390.8 548 L391.3 547.9 L391.8 547.9 L392.5 549.1 L393.3 551.6 L394.1 553.8 L394.7 554.2 L395.3 554.1 L395.9 554.1 L396.4 554 L397 553.9 L397.5 553.8 L398.1 553.8 L398.7 553.7 L399.1 552.8 L399.3 550.2 L399.4 547.7 L399.8 546.8 L400.3 546.7 L400.9 546.6 L401.4 546.5 L401.9 546.4 L402.4 546.3 L403 546.2 L403.5 546.1 L404 546 L404.5 545.9 L405.3 547 L406.4 549.5 L407.4 551.6 L408.1 551.9 L408.7 551.8 L409.2 551.6 L409.8 551.5 L410.3 551.4 L410.9 551.3 L411.4 551.1 L411.9 551 L412.3 550 L412.2 547.5 L412.1 545 L412.4 544 L412.9 543.9 L413.4 543.7 L413.9 543.6 L414.4 543.4 L414.9 543.3 L415.5 543.1 L416 543 L416.5 542.8 L417 542.6 L417.9 543.7 L419.2 546 L420.5 547.9 L421.2 548.2 L421.7 548 L422.2 547.9 L422.8 547.7 L423.3 547.5 L423.8 547.3 L424.4 547.1 L424.9 546.9 L425.1 545.9 L424.8 543.4 L424.4 540.9 L424.6 539.9 L425.1 539.7 L425.6 539.5 L426.1 539.3 L426.6 539.1 L427.1 538.9 L427.6 538.7 L428.1 538.5 L428.5 538.3 L429 538.1 L430 539 L431.6 541.2 L433 543 L433.8 543.2 L434.3 543 L434.8 542.7 L435.3 542.5 L435.8 542.2 L436.3 542 L436.8 541.7 L437.3 541.5 L437.5 540.5 L436.8 538 L436.2 535.6 L436.3 534.6 L436.8 534.4 L437.2 534.1 L437.7 533.8 L438.2 533.6 L438.7 533.3 L439.1 533.1 L439.6 532.8 L440.1 532.6 L440.5 532.3 L441.6 533.1 L443.4 535.1 L445 536.7 L445.8 536.9 L446.2 536.6 L446.7 536.3 L447.2 536 L447.7 535.7 L448.2 535.4 L448.7 535.1 L449.1 534.8 L449.2 533.8 L448.3 531.4 L447.4 529.1 L447.4 528.1 L447.8 527.8 L448.3 527.5 L448.7 527.2 L449.2 526.9 L449.6 526.6 L450 526.3 L450.5 525.9 L450.9 525.6 L451.4 525.3 L452.5 526 L454.5 527.8 L456.3 529.3 L457 529.3 L457.5 529 L457.9 528.7 L458.4 528.3 L458.8 528 L459.3 527.6 L459.7 527.3 L460.2 526.9 L460.1 525.9 L459 523.7 L457.8 521.4 L457.7 520.4 L458.2 520.1 L458.6 519.7 L459 519.4 L459.4 519 L459.8 518.7 L460.2 518.3 L460.6 518 L461 517.6 L461.4 517.3 L462.6 517.8 L464.8 519.4 L466.7 520.7 L467.5 520.7 L467.9 520.3 L468.3 519.9 L468.7 519.5 L469.1 519.1 L469.5 518.7 L469.9 518.3 L470.3 517.9 L470.2 516.9 L468.8 514.8 L467.4 512.7 L467.2 511.7 L467.6 511.3 L468 510.9 L468.4 510.6 L468.7 510.2 L469.1 509.8 L469.5 509.4 L469.8 509 L470.2 508.6 L470.5 508.2 L471.8 508.6 L474.1 510 L476.2 511.1 L476.9 511 L477.3 510.5 L477.7 510.1 L478 509.7 L478.4 509.2 L478.8 508.8 L479.1 508.4 L479.5 507.9 L479.2 507 L477.7 505 L476.1 503 L475.8 502.1 L476.1 501.6 L476.4 501.2 L476.8 500.8 L477.1 500.4 L477.4 500 L477.7 499.5 L478.1 499.1 L478.4 498.7 L478.7 498.2 L480 498.5 L482.4 499.6 L484.6 500.5 L485.3 500.3 L485.7 499.8 L486 499.4 L486.3 498.9 L486.6 498.4 L486.9 498 L487.3 497.5 L487.6 497 L487.2 496.1 L485.4 494.3 L483.6 492.5 L483.2 491.6 L483.5 491.1 L483.8 490.7 L484.1 490.2 L484.4 489.8 L484.7 489.3 L484.9 488.8 L485.2 488.4 L485.5 487.9 L485.8 487.5 L487.1 487.6 L489.6 488.4 L491.9 489.1 L492.6 488.8 L492.9 488.3 L493.1 487.8 L493.4 487.3 L493.7 486.8 L493.9 486.3 L494.2 485.8 L494.5 485.3 L494 484.5 L492 482.8 L490.1 481.2 L489.6 480.4 L489.8 479.9 L490.1 479.4 L490.3 478.9 L490.5 478.5 L490.7 478 L491 477.5 L491.2 477 L491.4 476.5 L491.6 476 L493 476 L495.6 476.6 L497.9 477 L498.6 476.7 L498.8 476.1 L499 475.6 L499.2 475.1 L499.5 474.6 L499.7 474 L499.9 473.5 L500.1 473 L499.5 472.2 L497.4 470.8 L495.3 469.4 L494.7 468.6 L494.9 468.1 L495.1 467.6 L495.3 467.1 L495.4 466.6 L495.6 466.1 L495.8 465.5 L496 465 L496.1 464.5 L496.3 464 L497.7 463.9 L500.3 464.2 L502.6 464.3 L503.3 463.9 L503.4 463.4 L503.6 462.9 L503.8 462.3 L503.9 461.8 L504.1 461.2 L504.2 460.7 L504.4 460.1 L503.7 459.4 L501.5 458.2 L499.3 457 L498.6 456.3 L498.7 455.8 L498.8 455.3 L499 454.7 L499.1 454.2 L499.2 453.7 L499.3 453.2 L499.5 452.6 L499.6 452.1 L499.7 451.6 L501 451.3 L503.7 451.3 L506 451.2 L506.6 450.8 L506.7 450.2 L506.8 449.7 L506.9 449.1 L507 448.6 L507.1 448 L507.2 447.4 L507.3 446.9 L506.6 446.2 L504.2 445.3 L501.9 444.3 L501.1 443.7 L501.2 443.1 L501.3 442.6 L501.4 442.1 L501.4 441.6 L501.5 441 L501.6 440.5 L501.6 440 L501.7 439.4 L501.8 438.9 L503.1 438.5 L505.7 438.2 L508 437.9 L508.6 437.4 L508.6 436.8 L508.7 436.2 L508.7 435.7 L508.7 435.1 L508.8 434.5 L508.8 434 L508.9 433.4 L508.1 432.8 L505.6 432.1 L503.2 431.4 L502.4 430.9 L502.4 430.3 L502.4 429.8 L502.4 429.3 L502.5 428.7 L502.5 428.2 L502.5 427.6 L502.5 427.1 L502.5 426.6 L502.5 426Z" fill="none" stroke="#000" stroke-width="2"/>
 <path d="M304.8 425 L298.9 415.9 L306.9 408.7 L309.8 401.8 L315.8 397 L321.9 391.9 L329.9 389 L335.7 386 L341.8 383.8 L348 381.7 L349.6 374 L358.2 375.8 L364.6 380.1 L367.8 367.8 L374.8 379 L386 367.8 L394 382.2 L404 372.6 L406.9 379 L412.9 380.6 L420 382.2 L422.7 388.1 L433 387.9 L440 392.1 L446.9 397 L456 403.1 L460.8 410 L466.7 417.8 L465.9 428 L467 437 L461.8 444.8 L455.7 453 L449.7 458.9 L437.6 460.8 L432.9 466.9 L429.2 472.5 L419.8 472.5 L415.8 478.7 L409.9 481.8 L401.1 478.7 L396.8 485.9 L390.7 490.1 L384.7 491.7 L378 484.8 L371.1 492.8 L363.8 490.1 L359.1 483.1 L355.1 478.1 L349.1 475 L342.9 474 L334.7 473.1 L335 463.8 L328 460.8 L314.9 461.1 L317.1 452.1 L312.1 446.8 L306.8 440.1 L288.7 434Z" fill="none" stroke="#ff3333" stroke-width="1"/>
 <g fill="#ff3333"><circle cx="304.8" cy="425" r="2.1"/><circle cx="298.9" cy="415.9" r="2.1"/><circle cx="306.9" cy="408.7" r="2.1"/><circle cx="309.8" cy="401.8" r="2.1"/><circle cx="315.8" cy="397" r="2.1"/><circle cx="321.9" cy="391.9" r="2.1"/><circle cx="329.9" cy="389" r="2.1"/><circle cx="335.7" cy="386" r="2.1"/><circle cx="341.8" cy="383.8" r="2.1"/><circle cx="348" cy="381.7" r="2.1"/><circle cx="349.6" cy="374" r="2.1"/><circle cx="358.2" cy="375.8" r="2.1"/><circle cx="364.6" cy="380.1" r="2.1"/><circle cx="367.8" cy="367.8" r="2.1"/><circle cx="374.8" cy="379" r="2.1"/><circle cx="386" cy="367.8" r="2.1"/><circle cx="394" cy="382.2" r="2.1"/><circle cx="404" cy="372.6" r="2.1"/><circle cx="406.9" cy="379" r="2.1"/><circle cx="412.9" cy="380.6" r="2.1"/><circle cx="420" cy="382.2" r="2.1"/><circle cx="422.7" cy="388.1" r="2.1"/><circle cx="433" cy="387.9" r="2.1"/><circle cx="440" cy="392.1" r="2.1"/><circle cx="446.9" cy="397" r="2.1"/><circle cx="456" cy="403.1" r="2.1"/><circle cx="460.8" cy="410" r="2.1"/><circle cx="466.7" cy="417.8" r="2.1"/><circle cx="465.9" cy="428" r="2.1"/><circle cx="467" cy="437" r="2.1"/><circle cx="461.8" cy="444.8" r="2.1"/><circle cx="455.7" cy="453" r="2.1"/><circle cx="449.7" cy="458.9" r="2.1"/><circle cx="437.6" cy="460.8" r="2.1"/><circle cx="432.9" cy="466.9" r="2.1"/><circle cx="429.2" cy="472.5" r="2.1"/><circle cx="419.8" cy="472.5" r="2.1"/><circle cx="415.8" cy="478.7" r="2.1"/><circle cx="409.9" cy="481.8" r="2.1"/><circle cx="401.1" cy="478.7" r="2.1"/><circle cx="396.8" cy="485.9" r="2.1"/><circle cx="390.7" cy="490.1" r="2.1"/><circle cx="384.7" cy="491.7" r="2.1"/><circle cx="378" cy="484.8" r="2.1"/><circle cx="371.1" cy="492.8" r="2.1"/><circle cx="363.8" cy="490.1" r="2.1"/><circle cx="359.1" cy="483.1" r="2.1"/><circle cx="355.1" cy="478.1" r="2.1"/><circle cx="349.1" cy="475" r="2.1"/><circle cx="342.9" cy="474" r="2.1"/><circle cx="334.7" cy="473.1" r="2.1"/><circle cx="335" cy="463.8" r="2.1"/><circle cx="328" cy="460.8" r="2.1"/><circle cx="314.9" cy="461.1" r="2.1"/><circle cx="317.1" cy="452.1" r="2.1"/><circle cx="312.1" cy="446.8" r="2.1"/><circle cx="306.8" cy="440.1" r="2.1"/><circle cx="288.7" cy="434" r="2.1"/></g>
 <line x1="340" y1="155" x2="379.5" y2="425.5" stroke="#000" stroke-width="1"/>
 <line x1="113" y1="425.5" x2="161" y2="425.5" stroke="#000" stroke-width="1"/>
 <line x1="252" y1="425.5" x2="379.5" y2="425.5" stroke="#000" stroke-width="1"/>
 <g fill="none" stroke="#808080" stroke-width="1.6">
  <path d="M176 414 V395.8 H192 V414"/>
  <path d="M192 395.8 V452 H188 V437 H170 V429 L169.8 423 L170 414 H192"/>
  <path d="M192 418 H235 V434 H192"/>
 </g>
 <path d="M485.8 653.4 A251.5 251.5 0 0 1 273.6 653.6" fill="none" stroke="#000" stroke-width="2"/>
 <g stroke="#000" stroke-width="1.6" fill="none"><path d="M317.7 657.7 L273.3 653.1 L311.3 678.2"/></g>
 <g stroke="#000" stroke-width="1.2">
  <circle cx="340" cy="154.8" r="6.6" fill="#00ffff"/>
  <circle cx="106" cy="425.7" r="6.6" fill="#00ffff"/>
 </g>
 <path d="M336.6 158.8 L340 151.3 L343.4 158.8 M338 156.2 H342" fill="none" stroke="#000" stroke-width="1.7"/>
 <path d="M103.3 423.3 H108.2 Q109.6 423.3 109.6 424.6 Q109.6 425.9 108.3 425.9 Q109.9 426 109.9 427.6 Q109.9 429 108.4 429 H103.3 Z M103.3 426 H108.3" fill="none" stroke="#000" stroke-width="1.9"/>
 <path d="M273.3 653.1 L283 654.2 L281.5 658.5 Z" fill="#000"/>
</svg>

<div class="a" style="left:2px;top:659px;width:95px;height:23px;background:#e3fcdc"></div>
<div class="a" style="left:2px;top:682px;width:95px;height:25px;background:#efefef"></div>
<div class="a" style="left:18px;top:663px;font-weight:700;font-size:14px;letter-spacing:-0.8px">1:1</div>
<div class="a btn" style="left:3px;width:22px"></div>
<div class="a btn" style="left:27px;width:46px"></div>
<div class="a btn" style="left:75px;width:22px"></div>
<div class="a" style="left:42.5px;top:686.5px;font-weight:700;font-size:14.5px;letter-spacing:-1.2px;font-family:'Liberation Serif',serif">1:1</div>
<svg class="a" style="left:0;top:680px" width="100" height="30"><g fill="none" stroke="#000" stroke-width="1.1"><path d="M11.15 8.3 H16.65 L20.4 12.15 V17.65 L16.65 21.5 H11.15 L7.4 17.65 V12.15 Z"/><path d="M83.25 8.3 H88.75 L92.5 12.15 V17.65 L88.75 21.5 H83.25 L79.5 17.65 V12.15 Z"/></g><g fill="#000"><rect x="10" y="14" width="7.8" height="2"/><rect x="82.1" y="14" width="7.8" height="2"/><rect x="85.1" y="11.1" width="1.9" height="7.8"/></g></svg>
<div class="a" style="left:0;top:707px;width:936px;height:1px;background:#e2e2e2"></div>
<div class="a" style="left:0;top:708px;width:936px;height:2px;background:#a0a0a0"></div>
<div class="a" style="left:0;top:710px;width:936px;height:1px;background:#fafafa"></div>
<div class="a" style="left:0;top:711px;width:936px;height:5px;background:#f0edec"></div>
<div class="a" style="left:8px;top:713px;font-size:12px;white-space:nowrap">Ready</div>
</body></html>
